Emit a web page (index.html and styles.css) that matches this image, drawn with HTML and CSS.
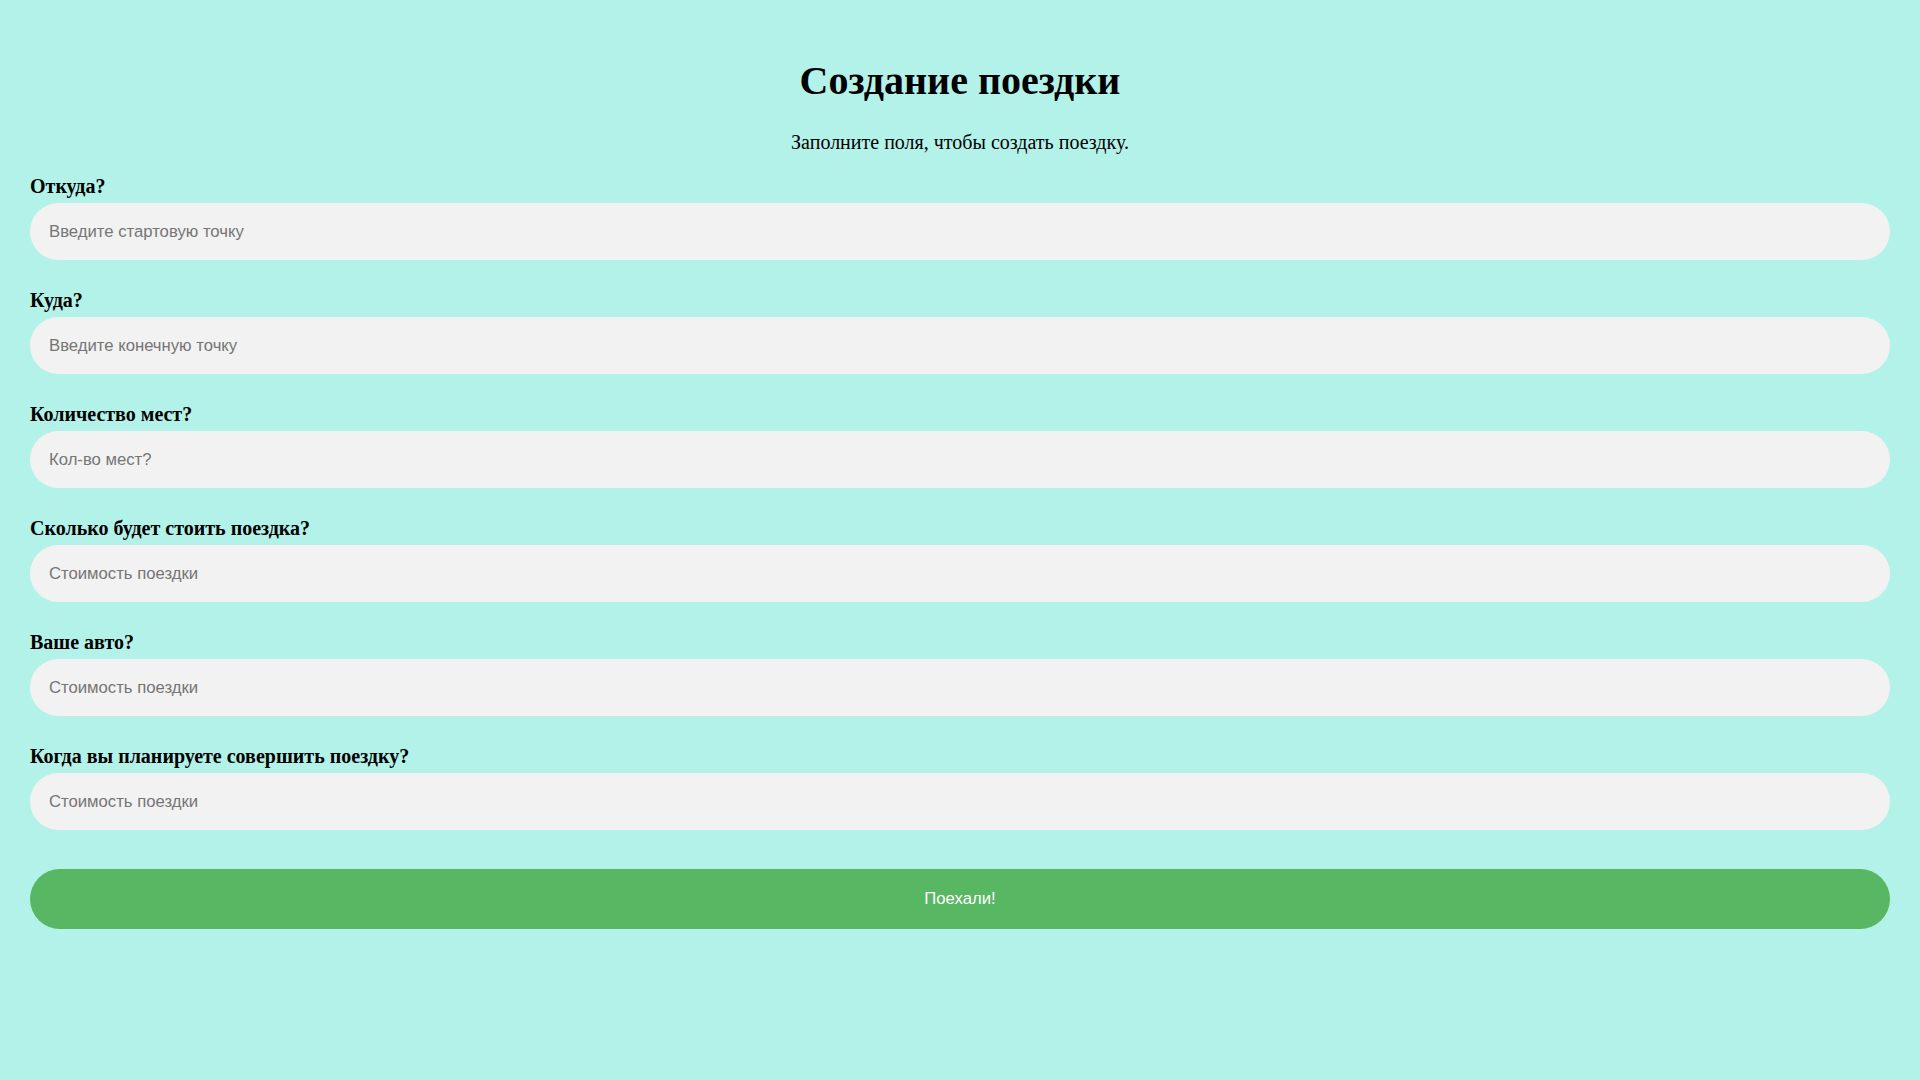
FILE: index.html
```html
<!DOCTYPE html>
<html lang="ru">
<head>
<meta charset="utf-8">
<title>Создание поездки</title>
<link rel="stylesheet" href="styles.css">
</head>
<body>
<main class="page">
  <h1 class="title">Создание поездки</h1>
  <p class="subtitle">Заполните поля, чтобы создать поездку.</p>
  <form class="form">
    <div class="field">
      <label class="label">Откуда?</label>
      <input class="input" type="text" placeholder="Введите стартовую точку">
    </div>
    <div class="field">
      <label class="label">Куда?</label>
      <input class="input" type="text" placeholder="Введите конечную точку">
    </div>
    <div class="field">
      <label class="label">Количество мест?</label>
      <input class="input" type="text" placeholder="Кол-во мест?">
    </div>
    <div class="field">
      <label class="label">Сколько будет стоить поездка?</label>
      <input class="input" type="text" placeholder="Стоимость поездки">
    </div>
    <div class="field">
      <label class="label">Ваше авто?</label>
      <input class="input" type="text" placeholder="Стоимость поездки">
    </div>
    <div class="field">
      <label class="label">Когда вы планируете совершить поездку?</label>
      <input class="input" type="text" placeholder="Стоимость поездки">
    </div>
    <button class="submit" type="button">Поехали!</button>
  </form>
</main>
</body>
</html>
```

FILE: styles.css
```css
html, body {
  margin: 0;
  padding: 0;
  background: #b3f2e9;
}

body {
  font-family: "Liberation Serif", "Times New Roman", serif;
  color: #000;
}

.page {
  padding: 58px 30px 40px;
}

.title {
  margin: 0;
  font-size: 40px;
  font-weight: bold;
  text-align: center;
  line-height: 46px;
}

.subtitle {
  margin: 27px 0 21px;
  font-size: 20px;
  line-height: 23px;
  text-align: center;
}

.form {
  display: flex;
  flex-direction: column;
}

.field {
  display: flex;
  flex-direction: column;
  margin-bottom: 29px;
}

.label {
  font-size: 20px;
  font-weight: bold;
  line-height: 23px;
  margin-bottom: 5px;
}

.input {
  box-sizing: border-box;
  height: 57px;
  width: 100%;
  border: none;
  border-radius: 29px;
  background: #f2f2f2;
  padding: 0 19px;
  font-family: "Liberation Sans", Arial, sans-serif;
  font-size: 16.7px;
  color: #333;
  outline: none;
}

.input::placeholder {
  color: #757575;
}

.submit {
  margin-top: 10px;
  height: 60px;
  width: 100%;
  border: none;
  border-radius: 30px;
  background: #57b762;
  color: #fff;
  font-family: "Liberation Sans", Arial, sans-serif;
  font-size: 16.7px;
  cursor: pointer;
}
```
